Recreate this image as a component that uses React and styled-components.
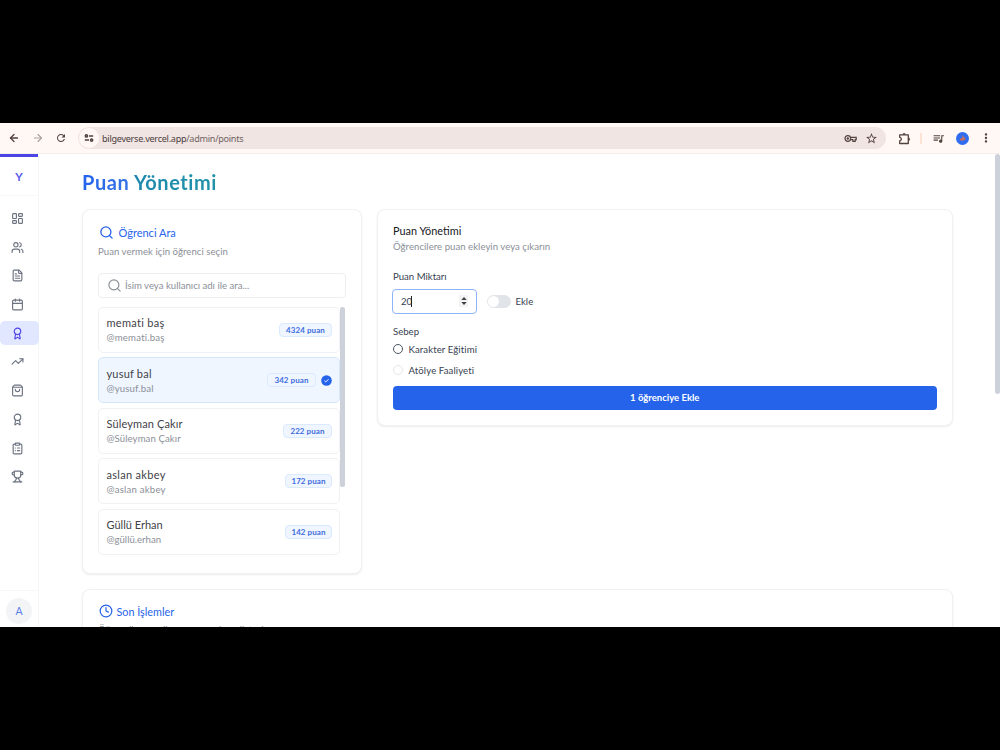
import React from "react";
import styled, { createGlobalStyle, css } from "styled-components";
import {
  LayoutDashboard,
  Users,
  FileText,
  Calendar,
  Award,
  TrendingUp,
  ShoppingBag,
  ClipboardList,
  Trophy,
  Search,
  Clock,
  ArrowLeft,
  ArrowRight,
} from "lucide-react";
import { MdRefresh, MdStarBorder, MdQueueMusic, MdMoreVert } from "react-icons/md";

const students = [
  { name: "memati baş", nick: "@memati.baş", points: 4324, w: 53, ls: 0.3 },
  { name: "yusuf bal", nick: "@yusuf.bal", points: 342, w: 49, ls: 0.2, selected: true },
  { name: "Süleyman Çakır", nick: "@Süleyman Çakır", points: 222, w: 49, ls: 0.12 },
  { name: "aslan akbey", nick: "@aslan akbey", points: 172, w: 47, ls: 0.3 },
  { name: "Güllü Erhan", nick: "@güllü.erhan", points: 142, w: 47, ls: 0 },
];

const menu = [
  { icon: LayoutDashboard },
  { icon: Users },
  { icon: FileText },
  { icon: Calendar },
  { icon: Award, active: true },
  { icon: TrendingUp },
  { icon: ShoppingBag },
  { icon: Award },
  { icon: ClipboardList },
  { icon: Trophy },
];

const GlobalStyle = createGlobalStyle`
  * {
    box-sizing: border-box;
  }

  body {
    margin: 0;
    background: #000;
    font-family: Lato, "Open Sans", sans-serif;
    overflow: hidden;
  }

  svg {
    display: block;
    flex: none;
  }
`;

const App = () => {
  return (
    <Screen>
      <GlobalStyle />
      <Browser>
        <BrowserBar />
        <Page>
          <Sidebar />
          <Content>
            <PageTitle>
              <span>Puan Yönetimi</span>
            </PageTitle>
            <Columns>
              <StudentCard />
              <PointsCard />
            </Columns>
            <HistoryCard>
              <CardHeading $gap="4px">
                <Clock size={14} strokeWidth={2.1} />
                <Label $size={10.8}>Son İşlemler</Label>
              </CardHeading>
              <CardHint>Öğrencilere verilen son puanların listesi</CardHint>
            </HistoryCard>
          </Content>
          <PageScroll />
        </Page>
      </Browser>
    </Screen>
  );
};

const BrowserBar = () => (
  <Toolbar>
    <NavIcons>
      <ArrowLeft size={12} strokeWidth={2.6} />
      <ArrowRight size={12} strokeWidth={2.2} color="#a79f9d" />
      <MdRefresh size={12} />
    </NavIcons>
    <AddressBar>
      <SiteInfo>
        <svg width="10" height="10" viewBox="0 0 10 10" fill="none" stroke="currentColor" strokeWidth="1.5">
          <circle cx="2.4" cy="2.9" r="1.1" />
          <path d="M5 2.9h4.2M.8 7.1H5" />
          <circle cx="7.6" cy="7.1" r="1.1" />
        </svg>
      </SiteInfo>
      <Url>
        bilgeverse.vercel.app<em>/admin/points</em>
      </Url>
      <svg width="13" height="13" viewBox="0 0 13 13" fill="none" stroke="currentColor" strokeWidth="1.2">
        <circle cx="3.8" cy="6.5" r="2.8" />
        <circle cx="3.8" cy="6.5" r="0.6" />
        <path d="M6.6 5.4h5.6v2.3h-1v1.6H8.9V7.7H6.6" />
      </svg>
      <MdStarBorder size={13} />
    </AddressBar>
    <ToolIcons>
      <svg width="13" height="13" viewBox="0 0 13 13" fill="none" stroke="currentColor" strokeWidth="1.3">
        <path d="M1.7 2.8h8.6v8.7H1.7V8.8c2.2-.3 2.2-3.2 0-3.5z" strokeLinejoin="round" />
        <path d="M4.8 2.5a1.3 1.1 0 0 1 2.6 0zM10.6 5.9a1.1 1.3 0 0 1 0 2.6z" fill="currentColor" strokeWidth="0.6" />
      </svg>
      <Separator />
      <MdQueueMusic size={13} />
      <Profile>
        <svg width="13" height="13" viewBox="0 0 13 13">
          <path d="M6.4 2.6 8 5l1.8 1-1 2-2.3 1-3-1 1-1.5 1.4-.5z" fill="#a7707f" />
          <path d="m3.8 8 3-1.7 2 1.5" stroke="#d9664f" fill="none" />
        </svg>
      </Profile>
      <MdMoreVert size={14} />
    </ToolIcons>
  </Toolbar>
);

const Sidebar = () => (
  <Side>
    <Logo>Y</Logo>
    <Menu>
      {menu.map(({ icon: Icon, active }, i) => (
        <MenuItem key={i} $active={active}>
          <Icon size={13} strokeWidth={2.1} />
        </MenuItem>
      ))}
    </Menu>
    <SideFooter>
      <Avatar>A</Avatar>
    </SideFooter>
  </Side>
);

const StudentCard = () => (
  <SearchCard>
    <CardHeading $gap="5px">
      <Search size={15} strokeWidth={2.1} />
      <Label $size={11}>Öğrenci Ara</Label>
    </CardHeading>
    <CardHint>Puan vermek için öğrenci seçin</CardHint>
    <SearchBox>
      <Search size={15} strokeWidth={1.9} />
      <Label $size={9.6}>İsim veya kullanıcı adı ile ara...</Label>
    </SearchBox>
    <ListArea>
      <List>
        {students.map((s) => (
          <StudentRow key={s.nick} $selected={s.selected}>
            <Names>
              <Name $ls={s.ls}>{s.name}</Name>
              <Nick $ls={s.ls}>{s.nick}</Nick>
            </Names>
            <Badge $width={s.w}>{s.points} puan</Badge>
            {s.selected && <CheckMark />}
          </StudentRow>
        ))}
      </List>
      <ListScroll />
    </ListArea>
  </SearchCard>
);

const CheckMark = () => (
  <svg width="11" height="11" viewBox="0 0 11 11">
    <circle cx="5.5" cy="5.5" r="5.3" fill="#2563eb" />
    <path d="m3.4 5.7 1.4 1.3 2.7-2.8" fill="none" stroke="#fff" strokeWidth="0.9" />
  </svg>
);

const PointsCard = () => (
  <FormCard>
    <FormTitle>Puan Yönetimi</FormTitle>
    <FormHint>Öğrencilere puan ekleyin veya çıkarın</FormHint>
    <Field $top={16.5}>
      <FieldLabel>Puan Miktarı</FieldLabel>
      <AmountRow>
        <NumberInput>
          20
          <Caret />
          <Spinner>
            <svg width="6" height="8" viewBox="0 0 6 8" fill="#3f3f46">
              <path d="M3 0 5.7 3H.3zM3 8 .3 5h5.4z" />
            </svg>
          </Spinner>
        </NumberInput>
        <Switch />
        <Label $size={9.6}>Ekle</Label>
      </AmountRow>
    </Field>
    <Field $top={11}>
      <FieldLabel>Sebep</FieldLabel>
      <Radio>
        <RadioDot $strong />
        Karakter Eğitimi
      </Radio>
      <Radio>
        <RadioDot />
        Atölye Faaliyeti
      </Radio>
    </Field>
    <SubmitButton>1 öğrenciye Ekle</SubmitButton>
  </FormCard>
);

const Screen = styled.div`
  height: 750px;
  padding-top: 123px;
  background: #000;
  overflow: hidden;
`;

const Browser = styled.div`
  height: 504px;
  display: flex;
  flex-direction: column;
  background: #fff;
  overflow: hidden;
`;

const Toolbar = styled.div`
  height: 31px;
  flex: none;
  display: flex;
  align-items: center;
  background: #fff8f5;
  border-bottom: 1px solid #f6eeeb;
  color: #51423e;
`;

const NavIcons = styled.div`
  width: 78px;
  padding-left: 8px;
  display: flex;
  gap: 11.5px;
`;

const AddressBar = styled.div`
  width: 808px;
  height: 22px;
  padding: 0 8px 0 1px;
  display: flex;
  align-items: center;
  gap: 8px;
  border-radius: 11px;
  background: #f1e5e3;
`;

const SiteInfo = styled.div`
  width: 20px;
  height: 20px;
  margin-right: -5px;
  display: flex;
  align-items: center;
  justify-content: center;
  border-radius: 50%;
  background: #fff8f5;
`;

const Url = styled.div`
  flex: 1;
  font-family: "Noto Sans", sans-serif;
  font-size: 9.1px;
  letter-spacing: -0.28px;
  color: #4a403e;

  em {
    font-style: normal;
    color: #6d6361;
  }
`;

const ToolIcons = styled.div`
  flex: 1;
  padding-left: 12px;
  display: flex;
  align-items: center;
`;

const Separator = styled.div`
  width: 1.5px;
  height: 11px;
  margin: 0 10px 0 9px;
  background: #fde3d3;
`;

const Profile = styled.div`
  width: 13px;
  height: 13px;
  margin: 0 10px 0 11px;
  border-radius: 50%;
  background: #2f6df0;
`;

const Page = styled.div`
  flex: 1;
  display: flex;
  min-height: 0;
`;

const Side = styled.div`
  width: 39px;
  flex: none;
  display: flex;
  flex-direction: column;
  border-right: 1px solid #f5f6f8;
`;

const Logo = styled.div`
  height: 42px;
  border-top: 3px solid #4b45e5;
  border-bottom: 1px solid #f8f8fa;
  display: flex;
  align-items: center;
  justify-content: center;
  color: #5b5bea;
  font-size: 11.5px;
  font-weight: 700;
`;

const Menu = styled.div`
  flex: 1;
  padding-top: 10.5px;
  display: flex;
  flex-direction: column;
  gap: 4.7px;
`;

const MenuItem = styled.div`
  height: 24px;
  margin-right: -1px;
  padding-left: 10.5px;
  display: flex;
  align-items: center;
  border-radius: 5px;
  color: #6b7280;
  ${({ $active }) =>
    $active &&
    css`
      color: #4f46e5;
      background: #e0e7ff;
    `}
`;

const SideFooter = styled.div`
  height: 37px;
  flex: none;
  padding-top: 7px;
  border-top: 1px solid #f8f8fa;
`;

const Avatar = styled.div`
  width: 26px;
  height: 26px;
  margin-left: 6px;
  display: flex;
  align-items: center;
  justify-content: center;
  border-radius: 50%;
  background: #f3f4f6;
  color: #5b7fe8;
  font-size: 10.5px;
`;

const Content = styled.div`
  flex: 1;
  min-width: 0;
  padding: 15px 42.5px 0 43px;
  display: flex;
  flex-direction: column;
`;

const PageTitle = styled.h1`
  margin: 0 0 13.5px;
  height: 26px;
  font-size: 20px;
  line-height: 26px;
  font-weight: 700;
  letter-spacing: 0.56px;

  span {
    color: transparent;
    background: linear-gradient(90deg, #2563eb 0%, #3474e6 36%, #1e88ae 40%, #1f93a8 100%);
    background-clip: text;
  }
`;

const Columns = styled.div`
  display: flex;
  align-items: flex-start;
  gap: 15px;
`;

const Card = styled.div`
  border: 1px solid #eff1f4;
  border-radius: 8px;
  background: #fff;
  box-shadow: 0 1px 2px rgba(0, 0, 0, 0.08);
`;

const SearchCard = styled(Card)`
  width: 279.5px;
  height: 365.5px;
  padding: 14px 15px;
`;

const FormCard = styled(Card)`
  flex: 1;
  height: 217px;
  padding: 12px 15px 0 15.5px;
`;

const HistoryCard = styled(Card)`
  margin-top: 15px;
  padding: 12px 15px;
  height: 80px;
  flex: none;
`;

const CardHeading = styled.div`
  height: 18px;
  display: flex;
  align-items: center;
  gap: ${({ $gap }) => $gap};
  padding-left: 0.5px;
  color: #2563eb;
`;

const Label = styled.span`
  font-size: ${({ $size }) => $size}px;
  white-space: nowrap;
`;

const CardHint = styled.div`
  margin-top: 3px;
  height: 14px;
  font-size: 9.6px;
  line-height: 14px;
  letter-spacing: 0.03px;
  color: #8b8f98;
  white-space: nowrap;
`;

const SearchBox = styled.div`
  margin-top: 14px;
  height: 25px;
  padding-left: 7.5px;
  display: flex;
  align-items: center;
  gap: 3.5px;
  border: 1px solid #eceef1;
  border-radius: 4px;
  color: #8b8f98;
`;

const ListArea = styled.div`
  margin-top: 9px;
  display: flex;
`;

const List = styled.div`
  width: 242px;
  display: flex;
  flex-direction: column;
  gap: 4.6px;
`;

const ListScroll = styled.div`
  width: 5px;
  height: 180px;
  border-radius: 2px;
  background: #cdd1d9;
`;

const StudentRow = styled.div`
  height: 46px;
  padding: 0 7px 0 7.5px;
  display: flex;
  align-items: center;
  border: 1px solid ${({ $selected }) => ($selected ? "#d6e6fd" : "#eff1f3")};
  border-radius: 5px;
  background: ${({ $selected }) => ($selected ? "#eff6ff" : "#fff")};

  svg {
    margin-left: 5px;
  }
`;

const Names = styled.div`
  flex: 1;
  padding-top: 1px;
`;

const Name = styled.div`
  font-size: 11px;
  line-height: 15px;
  letter-spacing: ${({ $ls }) => $ls}px;
  color: #3f4249;
`;

const Nick = styled.div`
  font-size: 9.6px;
  line-height: 15px;
  letter-spacing: ${({ $ls }) => $ls * 0.7}px;
  color: #8b8f98;
`;

const Badge = styled.div`
  width: ${({ $width }) => $width}px;
  height: 14px;
  display: flex;
  align-items: center;
  justify-content: center;
  border: 1px solid #dbeafe;
  border-radius: 4px;
  background: #eff6ff;
  color: #3f6ddd;
  font-size: 8px;
  font-weight: 700;
  letter-spacing: 0.08px;
`;

const FormTitle = styled.div`
  height: 18px;
  font-size: 10.9px;
  line-height: 18px;
  color: #16181d;
`;

const FormHint = styled(CardHint)`
  margin-top: 0;
`;

const Field = styled.div`
  margin-top: ${({ $top }) => $top}px;
`;

const FieldLabel = styled.div`
  height: 14px;
  font-size: 9.6px;
  line-height: 14px;
  color: #374151;
`;

const AmountRow = styled.div`
  margin-top: 4.5px;
  display: flex;
  align-items: center;
  color: #374151;
`;

const NumberInput = styled.div`
  width: 85px;
  height: 25px;
  margin: 0 9.5px 0 -1px;
  padding: 0 8px;
  display: flex;
  align-items: center;
  border: 1.5px solid #8db4fa;
  border-radius: 4px;
  font-size: 9.6px;
`;

const Caret = styled.span`
  width: 1px;
  height: 11px;
  margin-left: -1px;
  flex: none;
  background: #222;
`;

const Spinner = styled.div`
  width: 9px;
  height: 12px;
  margin-left: auto;
  display: flex;
  align-items: center;
  justify-content: center;
  background: #f3f3f3;
`;

const Switch = styled.div`
  width: 24px;
  height: 13px;
  margin-right: 5px;
  padding: 1px;
  border-radius: 7px;
  background: #e1e4e9;

  &::before {
    content: "";
    display: block;
    width: 11px;
    height: 11px;
    border-radius: 50%;
    background: #fff;
  }
`;

const Radio = styled.div`
  height: 21px;
  display: flex;
  align-items: center;
  gap: 5.5px;
  font-size: 9.6px;
  letter-spacing: 0.1px;
  color: #374151;
`;

const RadioDot = styled.span`
  width: 10px;
  height: 10px;
  border-radius: 50%;
  border: ${({ $strong }) => ($strong ? "1.5px solid #4b5563" : "1px solid #e5e7eb")};
`;

const SubmitButton = styled.div`
  height: 24px;
  margin-top: 5px;
  display: flex;
  align-items: center;
  justify-content: center;
  border-radius: 4px;
  background: #2563eb;
  color: #fff;
  font-size: 9.5px;
  font-weight: 700;
`;

const PageScroll = styled.div`
  width: 5px;
  height: 240px;
  border-radius: 3px;
  background: #cdd1d9;
`;

export default App;
